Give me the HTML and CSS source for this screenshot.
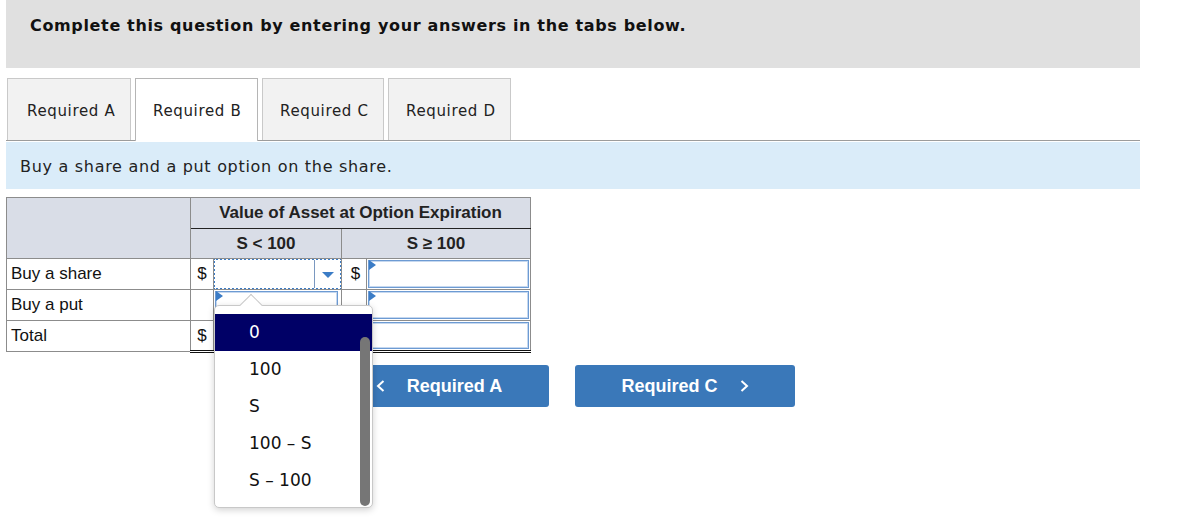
FILE: index.html
```html
<!DOCTYPE html>
<html>
<head>
<meta charset="utf-8">
<link rel="stylesheet" href="styles.css">
</head>
<body>
<div class="page">
  <div class="banner"><h1 class="banner-title">Complete this question by entering your answers in the tabs below.</h1></div>
  <div class="tabs">
    <div class="tab tab-a">Required A</div>
    <div class="tab tab-b tab-active">Required B</div>
    <div class="tab tab-c">Required C</div>
    <div class="tab tab-d">Required D</div>
  </div>
  <div class="instr">Buy a share and a put option on the share.</div>
  <div class="work">
    <table class="grid">
      <colgroup>
        <col class="c-label"><col class="c-dollar1"><col class="c-val1"><col class="c-dollar2"><col class="c-val2">
      </colgroup>
      <tr class="h1">
        <th class="corner" rowspan="2"></th>
        <th class="h-top" colspan="4">Value of Asset at Option Expiration</th>
      </tr>
      <tr class="h2">
        <th colspan="2">S &lt; 100</th>
        <th colspan="2">S &#8805; 100</th>
      </tr>
      <tr class="r1">
        <td class="label">Buy a share</td>
        <td class="dollar">$</td>
        <td class="sel-cell"><div class="select"><div class="sel-field"></div><div class="sel-btn"><span class="caret-down"></span></div></div></td>
        <td class="dollar dollar2">$</td>
        <td class="in-cell"><div class="inp"><span class="flag"></span></div></td>
      </tr>
      <tr class="r2">
        <td class="label">Buy a put</td>
        <td class="dollar"></td>
        <td class="in-cell"><div class="inp inp-mid"><span class="flag"></span></div></td>
        <td class="dollar dollar2"></td>
        <td class="in-cell"><div class="inp"><span class="flag"></span></div></td>
      </tr>
      <tr class="r3">
        <td class="label">Total</td>
        <td class="dollar">$</td>
        <td class="in-cell"><div class="inp inp-mid"></div></td>
        <td class="dollar dollar2"></td>
        <td class="in-cell"><div class="inp"></div></td>
      </tr>
    </table>
    <div class="navs">
      <div class="nav-btn"><svg class="chev" width="9" height="12" viewBox="0 0 9 12"><path d="M7.5 1 L2 6 L7.5 11" fill="none" stroke="#fff" stroke-width="2"/></svg><span>Required A</span></div>
      <div class="nav-btn"><span>Required C</span><svg class="chev" width="9" height="12" viewBox="0 0 9 12"><path d="M1.5 1 L7 6 L1.5 11" fill="none" stroke="#fff" stroke-width="2"/></svg></div>
    </div>
    <div class="popup">
      <div class="opt opt-sel">0</div>
      <div class="opt">100</div>
      <div class="opt">S</div>
      <div class="opt">100 &#8211; S</div>
      <div class="opt">S &#8211; 100</div>
      <div class="scroll"></div>
    </div>
  </div>
</div>
</body>
</html>
```
FILE: styles.css
```css
html, body { margin: 0; padding: 0; background: #fff; }
body { min-height: 532px; }
.page { padding-left: 6px; width: 1134px; font-family: "DejaVu Sans", Verdana, sans-serif; color: #000; }

.banner { height: 68px; background: #e0e0e0; padding: 0 24px; box-sizing: border-box; }
.banner-title { margin: 0; padding-top: 16px; font-size: 16px; letter-spacing: 0.65px; line-height: 20px; font-weight: bold; color: #111; }

.tabs { margin-top: 10px; height: 62px; display: flex; gap: 4px; padding-left: 1px; border-bottom: 1px solid #9c9c9c; align-items: flex-end; }
.tab { width: 123px; height: 62px; box-sizing: border-box; background: #f2f2f2; border: 1px solid #c9c9c9; border-bottom: none; display: flex; align-items: center; padding-left: 17px; padding-top: 2px; font-size: 15px; letter-spacing: 0.65px; color: #222; white-space: nowrap; }
.tab-a { width: 124px; padding-left: 19px; }
.tab-c { width: 122px; }
.tab-active { background: #fff; height: 63px; margin-bottom: -1px; border-color: #b5b5b5; }

.instr { margin-top: 1px; height: 47px; background: #daecf9; padding-left: 14px; padding-top: 1px; box-sizing: border-box; display: flex; align-items: center; font-size: 16px; letter-spacing: 0.7px; color: #222; }

.work { position: relative; margin-top: 8px; }

.grid { border-collapse: collapse; font-family: "Liberation Sans", Arial, sans-serif; font-size: 17px; color: #111; table-layout: fixed; width: 524px; }
.c-label { width: 184px; }
.c-dollar1 { width: 23px; }
.c-val1 { width: 128px; }
.c-dollar2 { width: 25px; }
.c-val2 { width: 164px; }
.grid th, .grid td { border: 1px solid #8c8c8c; padding: 0; }
.grid th { background: #d9dde7; font-weight: bold; text-align: center; color: #222; }
.h1 { height: 31px; }
.h2 { height: 30px; }
.h-top { border-bottom: 1px solid #222 !important; }
.r1 { height: 31px; }
.r2 { height: 30px; }
.r3 { height: 29px; }
.label { padding-left: 4px !important; }
.dollar { text-align: center; }
.dollar2 { padding-left: 3px !important; }
.r3 td:not(.label) { border-top: 1px solid #111; border-bottom: 3px double #111; }

.sel-cell { padding: 0 !important; }
.select { height: 32px; margin: -1px; box-sizing: border-box; border: 2px dotted #3b7cc6; display: flex; }
.sel-field { flex: 1; }
.sel-btn { width: 25px; border-left: 1px solid #7a98c0; display: flex; align-items: center; justify-content: center; }
.caret-down { width: 0; height: 0; border-left: 6px solid transparent; border-right: 6px solid transparent; border-top: 6px solid #3b7cc6; margin-top: 2px; }

.in-cell { padding: 1px !important; }
.inp { position: relative; height: 28px; box-sizing: border-box; border: 1px solid #6d9bd3; box-shadow: inset 0 0 0 1px #c6d8ef; background: #fff; }
.r3 .inp { height: 27px; }
.inp-mid { margin-right: 2px; }
.flag { position: absolute; left: 0; top: -1px; width: 0; height: 0; border-top: 5px solid transparent; border-bottom: 5px solid transparent; border-left: 7px solid #3b7cc6; }

.navs { margin-top: 12px; margin-left: 323px; display: flex; gap: 26px; }
.nav-btn { width: 220px; height: 42px; border-radius: 3px; background: #3a78b9; color: #fff; display: flex; align-items: center; justify-content: center; gap: 22px; font-family: "Liberation Sans", Arial, sans-serif; font-weight: bold; font-size: 18px; }
.chev { display: block; }

.popup { position: absolute; left: 208px; top: 108px; width: 159px; height: 203px; box-sizing: border-box; background: #fff; border: 1px solid #c8c8c8; border-radius: 5px; box-shadow: 0 2px 7px rgba(0,0,0,0.18); padding-top: 8px; }
.popup::before { content: ""; position: absolute; left: 28px; top: -9px; width: 15px; height: 15px; background: #fff; border-top: 1px solid #c8c8c8; border-left: 1px solid #c8c8c8; transform: rotate(45deg); }
.opt { position: relative; height: 37px; line-height: 37px; padding-left: 34px; font-size: 17px; color: #111; }
.opt-sel { background: #000066; color: #fff; }
.scroll { position: absolute; right: 2px; top: 31px; bottom: 1px; width: 10px; background: #767676; border-radius: 5px; }
```
